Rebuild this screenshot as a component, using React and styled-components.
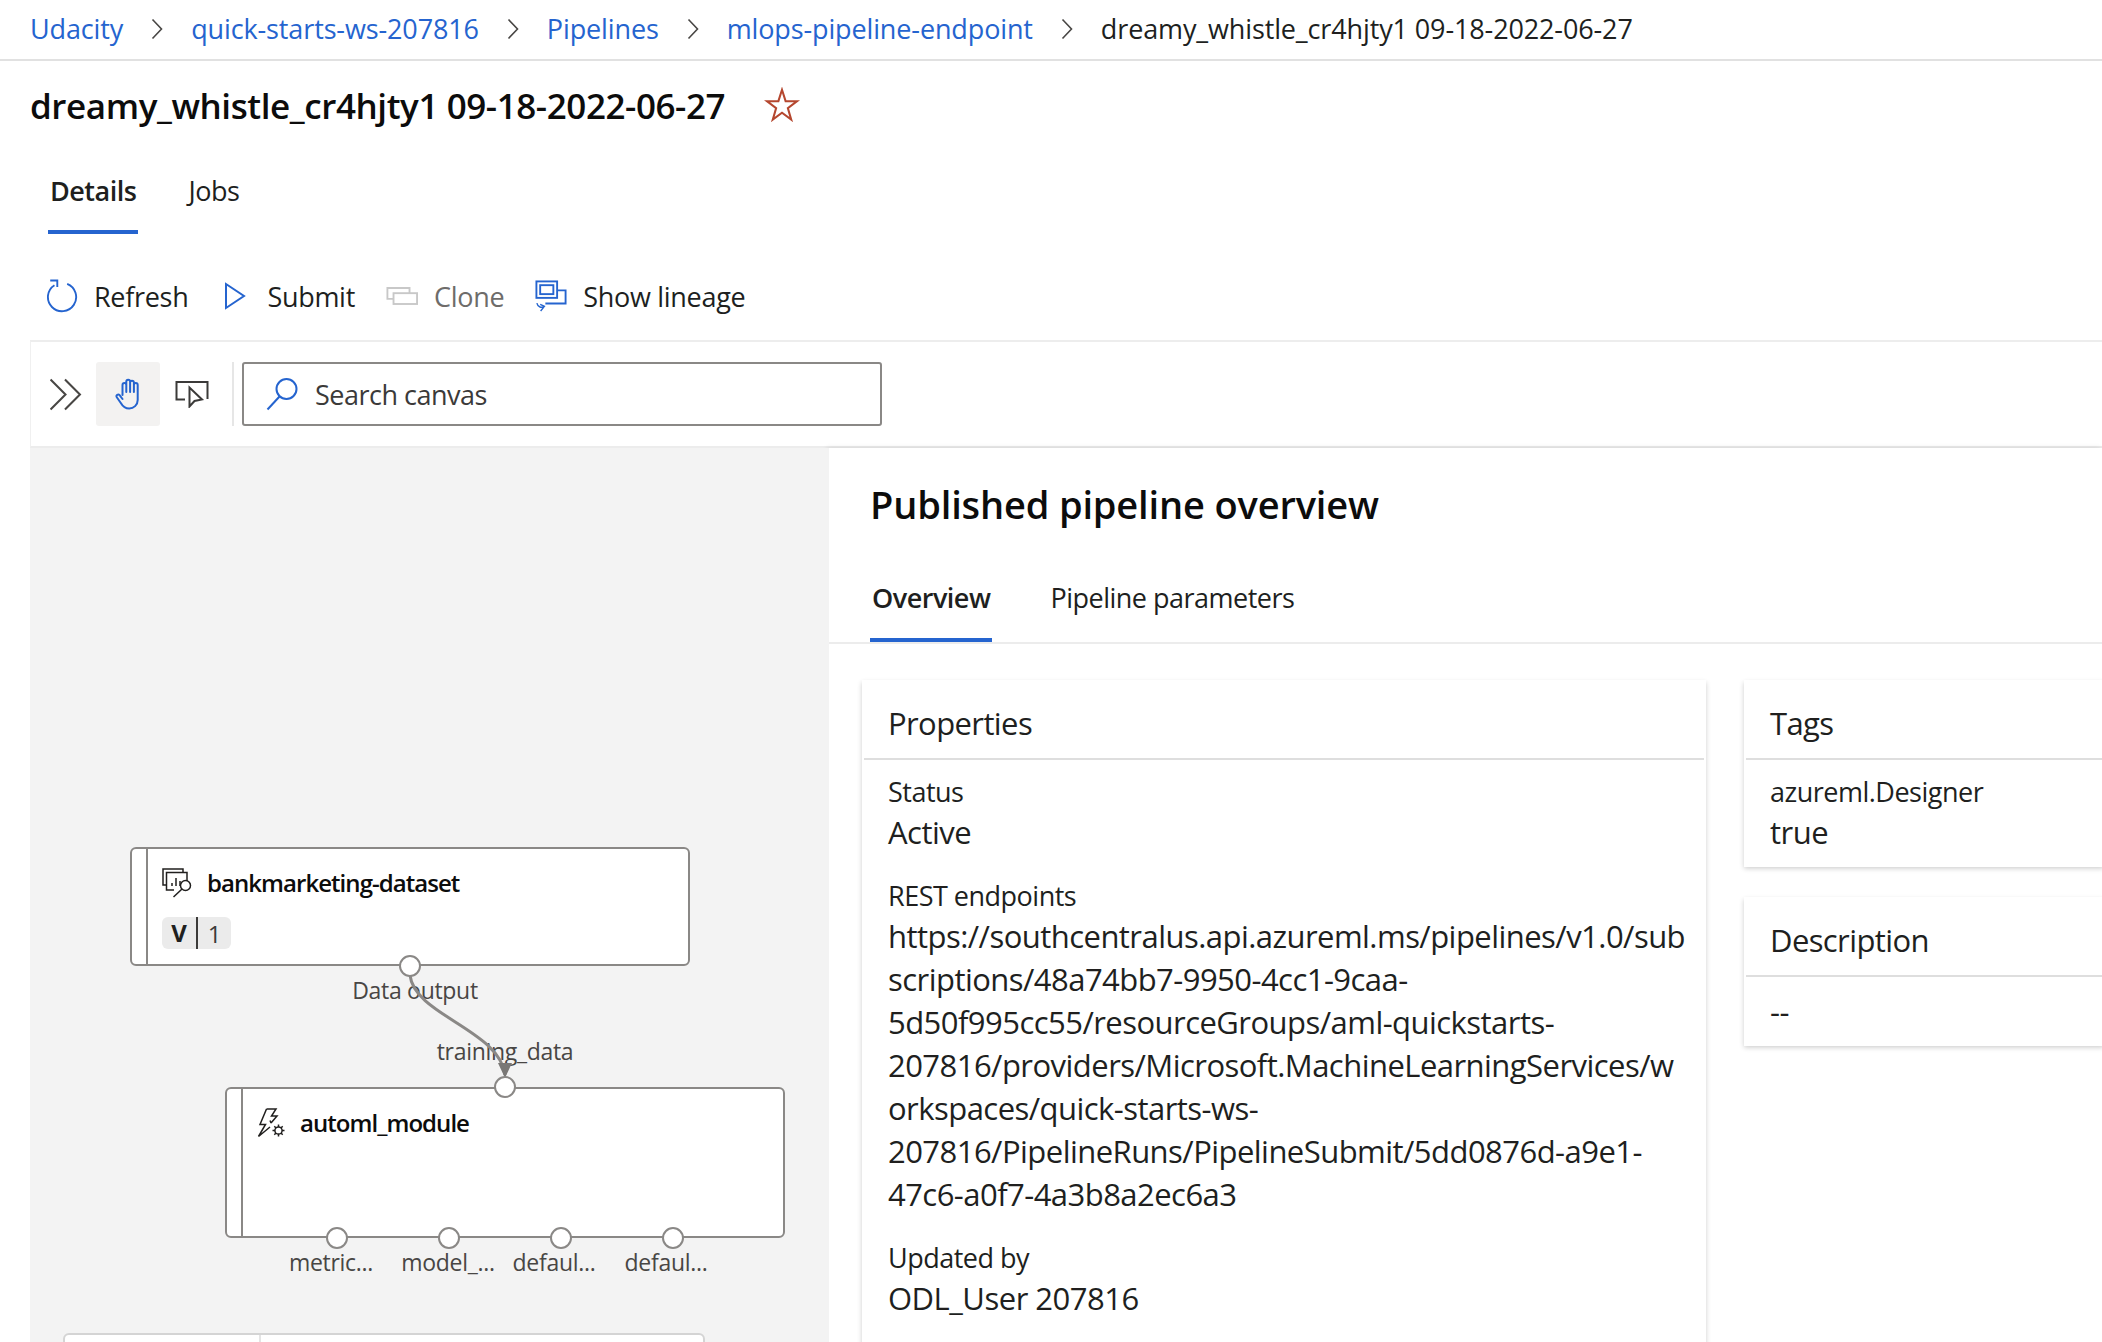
import React from 'react';
import styled, { createGlobalStyle } from 'styled-components';

const BLUE = '#2564cf';
const INK = '#201f1e';
const FONT = '"Open Sans", "Noto Sans", sans-serif';

const GlobalStyle = createGlobalStyle`
  html, body {
    margin: 0;
    height: 100%;
    overflow: hidden;
    background: #fff;
    font-family: ${FONT};
    color: ${INK};
  }
  * { box-sizing: border-box; }
`;

const Page = styled.div`
  width: 2102px;
  height: 1342px;
  display: flex;
  flex-direction: column;
  overflow: hidden;
`;

const Breadcrumbs = styled.nav`
  height: 61px;
  flex: none;
  display: flex;
  align-items: center;
  padding: 0 0 2px 30px;
  border-bottom: 2px solid #e1e1e1;
  font-size: 27px;
  letter-spacing: -0.13px;
`;

const Crumb = styled.a`
  color: ${p => (p.$current ? INK : BLUE)};
  white-space: nowrap;
`;

const CrumbSep = styled.span`
  width: 68px;
  display: flex;
  justify-content: center;
  svg { display: block; }
`;

const TitleRow = styled.div`
  height: 88px;
  flex: none;
  display: flex;
  align-items: center;
  padding-left: 30px;
  gap: 39px;
`;

const Title = styled.h1`
  margin: 0;
  font-size: 35px;
  font-weight: 600;
  letter-spacing: -0.42px;
  white-space: nowrap;
  color: #0c0c0c;
`;

const Tabs = styled.div`
  display: flex;
  gap: ${p => p.$gap}px;
  height: ${p => p.$height}px;
  flex: none;
  padding-left: ${p => p.$left}px;
  border-bottom: ${p => (p.$rule ? '2px solid #ececec' : 'none')};
`;

const Tab = styled.div`
  padding: 0 2px ${p => p.$lift || 0}px;
  height: 100%;
  display: flex;
  align-items: center;
  font-size: 27px;
  letter-spacing: -0.5px;
  font-weight: ${p => (p.$active ? 600 : 400)};
  box-shadow: ${p => (p.$active ? `inset 0 -4px 0 ${BLUE}` : 'none')};
`;

const ActionBar = styled.div`
  height: 106px;
  flex: none;
  display: flex;
  align-items: center;
  gap: 31px;
  padding: 18px 0 0 46px;
`;

const Action = styled.div`
  display: flex;
  align-items: center;
  gap: 16px;
  font-size: 27px;
  letter-spacing: -0.3px;
  color: ${p => (p.$disabled ? '#6e6c6a' : INK)};
`;

const IconBox = styled.span`
  width: ${p => p.$size || 32}px;
  height: ${p => p.$size || 32}px;
  flex: none;
  display: flex;
  align-items: center;
  justify-content: center;
  svg { display: block; }
`;

const Workspace = styled.div`
  flex: 1;
  min-height: 0;
  margin-left: 30px;
  display: flex;
  flex-direction: column;
`;

const CanvasBar = styled.div`
  height: 108px;
  flex: none;
  display: flex;
  align-items: center;
  padding: 0 0 0 4px;
  border-top: 2px solid #ededed;
  border-left: 1px solid #f0f0f0;
  border-bottom: 2px solid #ececec;
`;

const BarButton = styled.span`
  width: ${p => (p.$active ? 64 : 63)}px;
  height: 64px;
  flex: none;
  display: flex;
  align-items: center;
  justify-content: center;
  border-radius: 3px;
  background: ${p => (p.$active ? '#f3f2f1' : 'transparent')};
`;

const BarDivider = styled.span`
  width: 2px;
  height: 64px;
  margin: 0 8px 0 9px;
  background: #e6e6e6;
`;

const SearchBox = styled.div`
  width: 640px;
  height: 64px;
  display: flex;
  align-items: center;
  gap: 17px;
  padding-left: 22px;
  border: 2px solid #8a8886;
  border-radius: 3px;
  font-size: 27px;
  letter-spacing: -0.5px;
  color: #3b3a39;
`;

const Split = styled.div`
  flex: 1;
  min-height: 0;
  display: flex;
`;

const Canvas = styled.div`
  width: 799px;
  flex: none;
  position: relative;
  background: #f3f3f3;
  overflow: hidden;
`;

const Node = styled.div`
  position: absolute;
  left: ${p => p.$x}px;
  top: ${p => p.$y}px;
  width: ${p => p.$w}px;
  height: ${p => p.$h}px;
  background: #fff;
  border: 2px solid #8a8886;
  border-radius: 6px;
  padding: 15px 0 0 14px;
  display: flex;
  flex-direction: column;
  align-items: flex-start;
  gap: 15px;
  &::before {
    content: '';
    position: absolute;
    left: 14px;
    top: 0;
    bottom: 0;
    width: 2px;
    background: #8a8886;
  }
`;

const NodeHead = styled.div`
  margin-left: 16px;
  display: flex;
  align-items: center;
  gap: 15px;
  font-size: 24px;
  font-weight: 600;
  letter-spacing: -0.95px;
  line-height: 38px;
  white-space: nowrap;
  color: #0c0c0c;
`;

const VersionPill = styled.div`
  margin-left: 16px;
  height: 32px;
  width: 69px;
  display: flex;
  align-items: center;
  border-radius: 6px;
  background: #ebebeb;
  font-size: 24px;
  color: #3b3a39;
`;

const PillKey = styled.b`
  width: 36px;
  height: 32px;
  line-height: 32px;
  text-align: center;
  color: ${INK};
  font-weight: 700;
  border-right: 2px solid #3b3a39;
`;

const PillValue = styled.span`
  flex: 1;
  text-align: center;
`;

const Port = styled.span`
  position: absolute;
  left: ${p => p.$x - 11}px;
  top: ${p => p.$y - 11}px;
  width: 22px;
  height: 22px;
  border-radius: 50%;
  background: #fff;
  border: 2px solid #8a8886;
`;

const PortLabel = styled.span`
  position: absolute;
  left: ${p => p.$x}px;
  top: ${p => p.$y}px;
  transform: translate(-50%, -50%);
  font-size: 23px;
  letter-spacing: -0.3px;
  color: #484644;
  white-space: nowrap;
`;

const Wire = styled.svg`
  position: absolute;
  left: 0;
  top: 0;
`;

const StubNode = styled.div`
  position: absolute;
  left: 33px;
  top: 885px;
  width: 642px;
  height: 40px;
  background: #fff;
  border: 2px solid #d4d4d4;
  border-radius: 6px 6px 0 0;
  &::before {
    content: '';
    position: absolute;
    left: 194px;
    top: 0;
    bottom: 0;
    width: 2px;
    background: #e4e4e4;
  }
`;

const Panel = styled.section`
  flex: 1;
  min-width: 0;
  background: #fff;
  box-shadow: -2px 0 5px rgba(0, 0, 0, 0.13);
  display: flex;
  flex-direction: column;
`;

const PanelTitle = styled.h2`
  margin: 0;
  flex: none;
  height: 113px;
  padding: 0 0 2px 41px;
  display: flex;
  align-items: center;
  font-size: 38px;
  font-weight: 600;
  letter-spacing: -0.15px;
  color: #0c0c0c;
`;

const PanelBody = styled.div`
  flex: 1;
  min-height: 0;
  display: flex;
  gap: 38px;
  padding: 36px 0 0 33px;
  overflow: hidden;
`;

const SideColumn = styled.div`
  flex: 1;
  min-width: 0;
  display: flex;
  flex-direction: column;
  gap: 30px;
  margin-right: -2px;
`;

const Card = styled.div`
  width: ${p => (p.$w ? `${p.$w}px` : 'auto')};
  flex: none;
  align-self: flex-start;
  background: #fff;
  box-shadow: 0 1.5px 5px rgba(0, 0, 0, 0.2);
  padding: 0 2px 13px;
  ${p => (p.$tall ? 'height: 760px;' : '')}
  ${p => (p.$side ? 'width: 100%;' : '')}
`;

const CardHead = styled.h3`
  margin: 0;
  height: 80px;
  padding: 8px 0 0 24px;
  display: flex;
  align-items: center;
  font-size: 31px;
  font-weight: 400;
  letter-spacing: -0.6px;
  border-bottom: 2px solid #dedede;
`;

const CardBody = styled.div`
  padding: 13px 0 0 24px;
  display: flex;
  flex-direction: column;
  gap: 23px;
`;

const Field = styled.div`
  display: flex;
  flex-direction: column;
`;

const FieldLabel = styled.div`
  font-size: 27px;
  line-height: 38px;
  letter-spacing: -0.5px;
`;

const FieldValue = styled.div`
  font-size: 31px;
  line-height: 43px;
  letter-spacing: ${p => (p.$url ? '-0.54px' : '-0.5px')};
  white-space: nowrap;
`;

const Chevron = () => (
  <svg width="12" height="22" viewBox="0 0 12 22" fill="none" stroke="#484644" strokeWidth="1.6">
    <path d="M1.5 1.5 10.5 11 1.5 20.5" />
  </svg>
);

const Star = () => (
  <svg width="36" height="36" viewBox="0 0 32 32" fill="none" stroke="#b5472f" strokeWidth="1.8">
    <path d="M16 2.5 19.2 12.6H29.5L21.2 18.8 24.2 29 16 22.8 7.8 29 10.8 18.8 2.5 12.6H12.8Z" />
  </svg>
);

const RefreshIcon = () => (
  <svg width="34" height="36" viewBox="0 0 34 36" fill="none" stroke={BLUE} strokeWidth="2">
    <path d="M22.5 5.2A15 15 0 1 1 9 6.5" />
    <path d="M4.5 1.5H12V8.5" />
  </svg>
);

const SubmitIcon = () => (
  <svg width="22" height="28" viewBox="0 0 22 28" fill="none" stroke={BLUE} strokeWidth="2">
    <path d="M2 2 20 14 2 26Z" />
  </svg>
);

const CloneIcon = () => (
  <svg width="34" height="20" viewBox="0 0 34 20" fill="none" stroke="#c8c8c8" strokeWidth="2">
    <path d="M8 13H1.5V1.5H25V7" />
    <rect x="8" y="7" width="25" height="11.5" />
  </svg>
);

const LineageIcon = () => (
  <svg width="34" height="34" viewBox="0 0 34 34" fill="none" stroke={BLUE} strokeWidth="2">
    <rect x="1.5" y="1.5" width="22" height="17.5" />
    <rect x="5.5" y="5.5" width="14" height="9.5" />
    <path d="M24 11H32.5V25H11" />
    <path d="M2 24.5C3 29 7 30 10 28M6 33 10 28 5.5 26" strokeWidth="1.5" />
  </svg>
);

const DoubleChevron = () => (
  <svg width="33" height="33" viewBox="0 0 32 32" fill="none" stroke="#484644" strokeWidth="2">
    <path d="M1.5 1.5 16 16 1.5 30.5M15.5 1.5 30 16 15.5 30.5" />
  </svg>
);

const HandIcon = () => (
  <svg width="26" height="32" viewBox="0 0 26 32" fill="none" stroke={BLUE} strokeWidth="2" strokeLinecap="round" strokeLinejoin="round">
    <path d="M7.5 17V7a1.9 1.9 0 0 1 3.8 0M11.3 14V3.6a1.9 1.9 0 0 1 3.8 0V14M15.1 14V4.6a1.9 1.9 0 0 1 3.8 0V14M18.9 14V7a1.9 1.9 0 0 1 3.8 0V22c0 5-4 8.5-8.5 8.5-4.2 0-6.6-2.4-8.4-5.5L1.8 19.2c-1.2-2 1.4-3.6 2.8-2L7.5 21" />
  </svg>
);

const CursorIcon = () => (
  <svg width="34" height="28" viewBox="0 0 34 28" fill="none" stroke="#3b3a39" strokeWidth="2">
    <path d="M10 19.5H1.5V2H32.5V19" />
    <path d="M14.5 7.5V26.5L19.5 21 27 19.5Z" fill="#fff" />
  </svg>
);

const SearchIcon = () => (
  <svg width="32" height="34" viewBox="0 0 32 34" fill="none" stroke={BLUE} strokeWidth="2">
    <circle cx="20.5" cy="12" r="10" />
    <path d="M13.5 19.5 1.5 32.5" />
  </svg>
);

const DatasetIcon = () => (
  <svg width="30" height="30" viewBox="0 0 30 30" fill="none" stroke="#201f1e" strokeWidth="1.5">
    <path d="M4.5 17H1V1H21V4" />
    <path d="M12 22H4.5V4.5H25V13" />
    <path d="M10 18V15M14 18V10M18 18V13" />
    <circle cx="23.5" cy="17.5" r="5" />
    <path d="M20 21 11.5 29" />
  </svg>
);

const ModuleIcon = () => (
  <svg width="28" height="30" viewBox="0 0 28 30" fill="none" stroke="#201f1e" strokeWidth="1.5">
    <path d="M9.5 1H19L14.5 8H20L14 15M14 15 13 12.5M9.5 1 3 16.5H8.5L1.5 28.5 13 19" />
    <circle cx="21.5" cy="22.5" r="3.6" />
    <path d="M21.5 16.5V19M21.5 26V28.5M15.5 22.5H18M25 22.5H27.5M17.3 18.3 19 20M24 25 25.7 26.7M17.3 26.7 19 25M24 20 25.7 18.3" />
  </svg>
);

const crumbs = ['Udacity', 'quick-starts-ws-207816', 'Pipelines', 'mlops-pipeline-endpoint'];
const endpointLines = [
  'https://southcentralus.api.azureml.ms/pipelines/v1.0/sub',
  'scriptions/48a74bb7-9950-4cc1-9caa-',
  '5d50f995cc55/resourceGroups/aml-quickstarts-',
  '207816/providers/Microsoft.MachineLearningServices/w',
  'orkspaces/quick-starts-ws-',
  '207816/PipelineRuns/PipelineSubmit/5dd0876d-a9e1-',
  '47c6-a0f7-4a3b8a2ec6a3',
];
const outputs = [
  { x: 307, labelX: 301, label: 'metric...' },
  { x: 419, labelX: 418, label: 'model_...' },
  { x: 531, labelX: 524, label: 'defaul...' },
  { x: 643, labelX: 636, label: 'defaul...' },
];

export default function App() {
  return (
    <Page>
      <GlobalStyle />
      <Breadcrumbs>
        {crumbs.map(c => (
          <React.Fragment key={c}>
            <Crumb>{c}</Crumb>
            <CrumbSep><Chevron /></CrumbSep>
          </React.Fragment>
        ))}
        <Crumb $current>dreamy_whistle_cr4hjty1 09-18-2022-06-27</Crumb>
      </Breadcrumbs>

      <TitleRow>
        <Title>dreamy_whistle_cr4hjty1 09-18-2022-06-27</Title>
        <Star />
      </TitleRow>

      <Tabs $gap={48} $height={85} $left={48}>
        <Tab $active $lift={2}>Details</Tab>
        <Tab $lift={2}>Jobs</Tab>
      </Tabs>

      <ActionBar>
        <Action><IconBox><RefreshIcon /></IconBox>Refresh</Action>
        <Action><IconBox><SubmitIcon /></IconBox>Submit</Action>
        <Action $disabled><IconBox><CloneIcon /></IconBox>Clone</Action>
        <Action><IconBox><LineageIcon /></IconBox>Show lineage</Action>
      </ActionBar>

      <Workspace>
        <CanvasBar>
          <IconBox $size={61}><DoubleChevron /></IconBox>
          <BarButton $active><HandIcon /></BarButton>
          <BarButton><CursorIcon /></BarButton>
          <BarDivider />
          <SearchBox>
            <SearchIcon />
            Search canvas
          </SearchBox>
        </CanvasBar>

        <Split>
          <Canvas>
            <Node $x={100} $y={399} $w={560} $h={119}>
              <NodeHead><DatasetIcon />bankmarketing-dataset</NodeHead>
              <VersionPill><PillKey>V</PillKey><PillValue>1</PillValue></VersionPill>
            </Node>
            <Node $x={195} $y={639} $w={560} $h={151}>
              <NodeHead><ModuleIcon />automl_module</NodeHead>
            </Node>
            <PortLabel $x={385} $y={542}>Data output</PortLabel>
            <PortLabel $x={475} $y={603}>training_data</PortLabel>
            <Wire width="799" height="896" viewBox="0 0 799 896" fill="none">
              <path d="M380 527C384 567 470 582 475 627" stroke="#8a8886" strokeWidth="3" />
              <path d="M468 615H482L475 630Z" fill="#7a7876" />
            </Wire>
            <Port $x={380} $y={518} />
            <Port $x={475} $y={639} />
            {outputs.map(o => (
              <React.Fragment key={o.x}>
                <Port $x={o.x} $y={790} />
                <PortLabel $x={o.labelX} $y={814}>{o.label}</PortLabel>
              </React.Fragment>
            ))}
            <StubNode />
          </Canvas>

          <Panel>
            <PanelTitle>Published pipeline overview</PanelTitle>
            <Tabs $gap={56} $height={83} $left={41} $rule>
              <Tab $active $lift={8}>Overview</Tab>
              <Tab $lift={8}>Pipeline parameters</Tab>
            </Tabs>
            <PanelBody>
              <Card $w={844} $tall>
                <CardHead>Properties</CardHead>
                <CardBody>
                  <Field>
                    <FieldLabel>Status</FieldLabel>
                    <FieldValue>Active</FieldValue>
                  </Field>
                  <Field>
                    <FieldLabel>REST endpoints</FieldLabel>
                    {endpointLines.map(line => (
                      <FieldValue $url key={line}>{line}</FieldValue>
                    ))}
                  </Field>
                  <Field>
                    <FieldLabel>Updated by</FieldLabel>
                    <FieldValue>ODL_User 207816</FieldValue>
                  </Field>
                </CardBody>
              </Card>
              <SideColumn>
                <Card $side>
                  <CardHead>Tags</CardHead>
                  <CardBody>
                    <Field>
                      <FieldLabel>azureml.Designer</FieldLabel>
                      <FieldValue>true</FieldValue>
                    </Field>
                  </CardBody>
                </Card>
                <Card $side>
                  <CardHead>Description</CardHead>
                  <CardBody>
                    <FieldValue>--</FieldValue>
                  </CardBody>
                </Card>
              </SideColumn>
            </PanelBody>
          </Panel>
        </Split>
      </Workspace>
    </Page>
  );
}
